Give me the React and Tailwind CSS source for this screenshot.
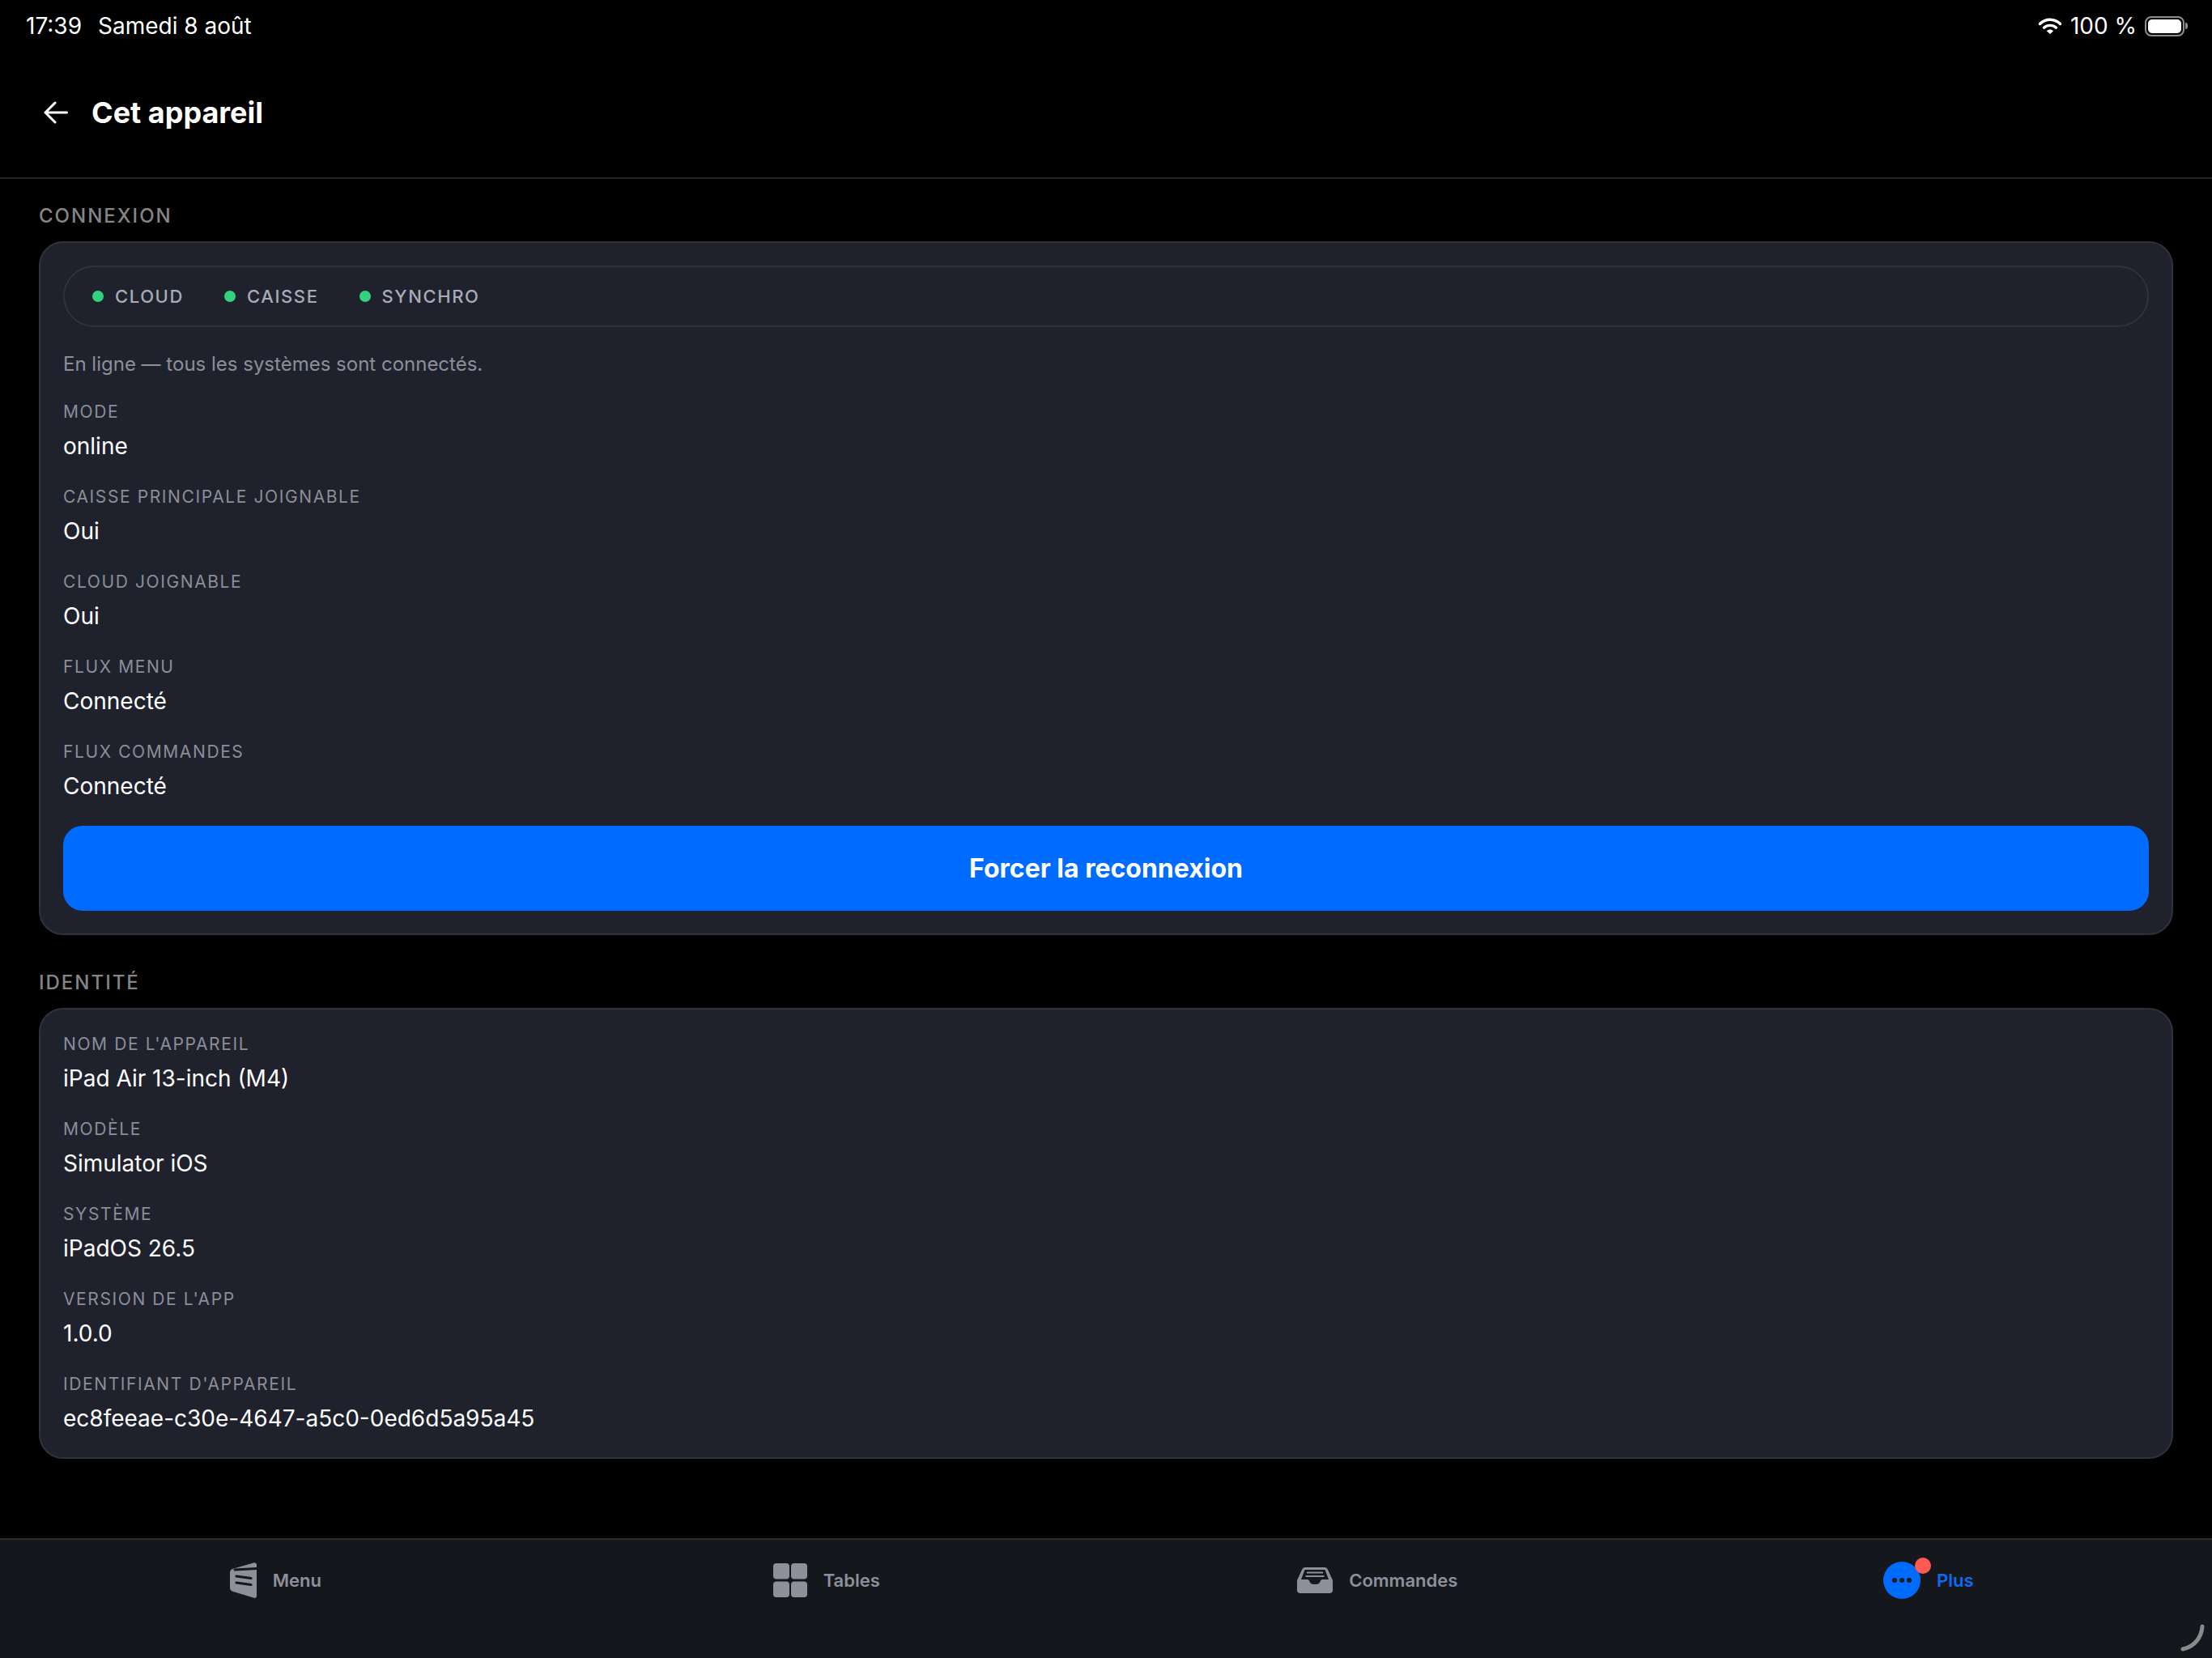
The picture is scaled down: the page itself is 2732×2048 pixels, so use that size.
const connectionRows = [
  { label: 'MODE', value: 'online' },
  { label: 'CAISSE PRINCIPALE JOIGNABLE', value: 'Oui' },
  { label: 'CLOUD JOIGNABLE', value: 'Oui' },
  { label: 'FLUX MENU', value: 'Connecté' },
  { label: 'FLUX COMMANDES', value: 'Connecté' },
]

const identityRows = [
  { label: "NOM DE L'APPAREIL", value: 'iPad Air 13-inch (M4)' },
  { label: 'MODÈLE', value: 'Simulator iOS' },
  { label: 'SYSTÈME', value: 'iPadOS 26.5' },
  { label: "VERSION DE L'APP", value: '1.0.0' },
  { label: "IDENTIFIANT D'APPAREIL", value: 'ec8feeae-c30e-4647-a5c0-0ed6d5a95a45' },
]

function StatusBar() {
  return (
    <div className="flex h-[60px] shrink-0 items-start justify-between pl-[32px] pr-[30px] pt-[13px] text-[28px] leading-[38px] text-white">
      <div className="flex gap-[20px]">
        <span>17:39</span>
        <span>Samedi 8 août</span>
      </div>
      <div className="flex items-center gap-[10px]">
        <svg width="30" height="22" viewBox="0 0 30 22" fill="none" stroke="white" strokeLinecap="round">
          <path d="M2.5 8.5C9.5 1.5 20.5 1.5 27.5 8.5" strokeWidth="3.4" />
          <path d="M7.5 13.2C11.5 9.4 18.5 9.4 22.5 13.2" strokeWidth="3.4" />
          <path d="M11.5 17.3L15 20.5L18.5 17.3C16.5 15.4 13.5 15.4 11.5 17.3Z" fill="white" strokeWidth="1" />
        </svg>
        <span>100 %</span>
        <div className="flex items-center">
          <div className="flex h-[25px] w-[49px] rounded-[8px] border-2 border-[#8e8e8e] p-[2px]">
            <div className="h-full w-full rounded-[5px] bg-white" />
          </div>
          <div className="ml-[1px] h-[8px] w-[3px] rounded-r-[3px] bg-[#8e8e8e]" />
        </div>
      </div>
    </div>
  )
}

function Header() {
  return (
    <header className="flex h-[161px] shrink-0 items-center gap-[29px] border-b-2 border-[#26272a] pl-[54px] pb-[2px]">
      <svg width="30" height="28" viewBox="0 0 30 28" fill="none" stroke="white" strokeWidth="3" strokeLinecap="round" strokeLinejoin="round">
        <path d="M28.5 14H2M14 2L2 14L14 26" />
      </svg>
      <h1 className="text-[36px] font-bold leading-[48px] text-white">Cet appareil</h1>
    </header>
  )
}

function StatusDot({ label }) {
  return (
    <div className="flex items-center gap-[14px]">
      <span className="h-[14px] w-[14px] rounded-full bg-[#34d17f]" />
      <span className="text-[22px] font-medium tracking-[1.6px] text-[#a7acb8]">{label}</span>
    </div>
  )
}

function InfoRow({ label, value }) {
  return (
    <div className="flex flex-col gap-[7px]">
      <span className="text-[21px] leading-[30px] tracking-[1.6px] text-[#8b8e98]">{label}</span>
      <span className="text-[28px] leading-[40px] text-white">{value}</span>
    </div>
  )
}

function SectionLabel({ children }) {
  return (
    <h2 className="mb-[15px] text-[24px] font-medium leading-[32px] tracking-[2px] text-[#858585]">{children}</h2>
  )
}

function MenuIcon() {
  return (
    <svg width="33" height="44" viewBox="0 0 33 44">
      <path d="M0 12C0 10 1 9 3 8L29 0.5C31.5 0 33 1 33 3V41C33 43.5 31 44.5 29 43.5L4 36C1.5 35 0 34 0 31Z" fill="#8e9099" />
      <path d="M6 9L33 7.5M8 17L26 19.5M8 25L26 27.5" stroke="#14171c" strokeWidth="3" strokeLinecap="round" fill="none" />
    </svg>
  )
}

function TablesIcon() {
  return (
    <svg width="42" height="42" viewBox="0 0 42 42" fill="#8e9099">
      <rect x="0" y="0" width="20" height="19.5" rx="4" />
      <rect x="22" y="0" width="20" height="19.5" rx="4" />
      <rect x="0" y="22.5" width="20" height="19.5" rx="4" />
      <rect x="22" y="22.5" width="20" height="19.5" rx="4" />
    </svg>
  )
}

function OrdersIcon() {
  return (
    <svg width="44" height="32" viewBox="0 0 44 32">
      <path d="M10 0H34C36 0 37 1 38 3L44 16V28C44 30.5 42.5 32 40 32H4C1.5 32 0 30.5 0 28V16L6 3C7 1 8 0 10 0Z" fill="#8e9099" />
      <path d="M9.5 3H34.5L39 15H31C30 15 29 16 28.5 17.5C28 20 26 21 22 21C18 21 16 20 15.5 17.5C15 16 14 15 13 15H5Z" fill="#14171c" />
      <path d="M12 6.5H32M10.5 11H33.5" stroke="#8e9099" strokeWidth="2" fill="none" />
    </svg>
  )
}

function MoreIcon() {
  return (
    <div className="relative flex h-[46px] w-[46px] items-center justify-center gap-[3px] rounded-full bg-[#006cff]">
      <span className="h-[6px] w-[6px] rounded-full bg-[#14171c]" />
      <span className="h-[6px] w-[6px] rounded-full bg-[#14171c]" />
      <span className="h-[6px] w-[6px] rounded-full bg-[#14171c]" />
      <span className="absolute right-[-13px] top-[-5px] h-[20px] w-[20px] rounded-full bg-[#ff5a52]" />
    </div>
  )
}

function NavItem({ icon, label, active }) {
  return (
    <div className="flex items-start justify-center gap-[20px] pt-[27px]">
      <div className="flex h-[46px] items-center">{icon}</div>
      <span className={`text-[22px] font-semibold leading-[46px] ${active ? 'text-[#0a6cf0]' : 'text-[#8e9099]'}`}>
        {label}
      </span>
    </div>
  )
}

export default function App() {
  return (
    <div className="relative flex h-[2048px] w-[2732px] flex-col overflow-hidden bg-black font-['Inter',sans-serif]">
      <StatusBar />
      <Header />

      <main className="flex-1 px-[48px] pt-[30px]">
        <SectionLabel>CONNEXION</SectionLabel>
        <section className="rounded-[30px] border-2 border-[#2f323c] bg-[#1f222d] p-[28px]">
          <div className="flex h-[76px] items-center gap-[50px] rounded-full border-2 border-[#2f323c] pl-[34px]">
            <StatusDot label="CLOUD" />
            <StatusDot label="CAISSE" />
            <StatusDot label="SYNCHRO" />
          </div>
          <p className="mt-[28px] text-[24px] leading-[36px] text-[#8b8f9a]">
            En ligne — tous les systèmes sont connectés.
          </p>
          <div className="mt-[26px] flex flex-col gap-[28px]">
            {connectionRows.map((row) => (
              <InfoRow key={row.label} label={row.label} value={row.value} />
            ))}
          </div>
          <button className="mt-[29px] h-[105px] w-full rounded-[24px] bg-[#006cff] text-[32px] font-bold text-white">
            Forcer la reconnexion
          </button>
        </section>

        <div className="mt-[43px]">
          <SectionLabel>IDENTITÉ</SectionLabel>
        </div>
        <section className="flex flex-col gap-[28px] rounded-[30px] border-2 border-[#2f323c] bg-[#1f222d] p-[28px]">
          {identityRows.map((row) => (
            <InfoRow key={row.label} label={row.label} value={row.value} />
          ))}
        </section>
      </main>

      <nav className="grid h-[148px] shrink-0 grid-cols-4 border-t-2 border-[#2c2d30] bg-[#14171c] pr-[10px]">
        <NavItem icon={<MenuIcon />} label="Menu" />
        <NavItem icon={<TablesIcon />} label="Tables" />
        <NavItem icon={<OrdersIcon />} label="Commandes" />
        <NavItem icon={<MoreIcon />} label="Plus" active />
      </nav>

      <svg className="absolute bottom-[8px] right-[8px]" width="32" height="34" viewBox="0 0 32 34" fill="none" stroke="#8a8a8a" strokeWidth="5" strokeLinecap="round">
        <path d="M28 3C27 17 18 28 4 31" />
      </svg>
    </div>
  )
}
